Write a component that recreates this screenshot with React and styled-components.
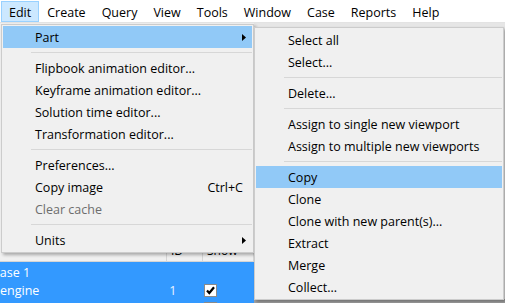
import React from 'react';
import styled, { createGlobalStyle } from 'styled-components';

const GlobalStyle = createGlobalStyle`
  html, body {
    margin: 0;
    padding: 0;
    background: #f0f0f0;
  }
  body {
    font-family: 'Open Sans', 'Noto Sans', sans-serif;
    font-size: 12.5px;
    color: #000;
  }
`;

const menuBarItems = ['Edit', 'Create', 'Query', 'View', 'Tools', 'Window', 'Case', 'Reports', 'Help'];

const editMenu = [
  { label: 'Part', submenu: true, active: true },
  { sep: true },
  { label: 'Flipbook animation editor...' },
  { label: 'Keyframe animation editor...' },
  { label: 'Solution time editor...' },
  { label: 'Transformation editor...' },
  { sep: true },
  { label: 'Preferences...' },
  { label: 'Copy image', shortcut: 'Ctrl+C' },
  { label: 'Clear cache', disabled: true },
  { sep: true },
  { label: 'Units', submenu: true },
];

const partMenu = [
  { label: 'Select all' },
  { label: 'Select...' },
  { sep: true },
  { label: 'Delete...' },
  { sep: true },
  { label: 'Assign to single new viewport' },
  { label: 'Assign to multiple new viewports' },
  { sep: true },
  { label: 'Copy', active: true },
  { label: 'Clone' },
  { label: 'Clone with new parent(s)...' },
  { label: 'Extract' },
  { label: 'Merge' },
  { label: 'Collect...' },
];

// the tree is scrolled a little to the right, so the case name is cut
const treeRows = [
  { name: 'Case 1', id: '', show: false, indent: -8 },
  { name: 'engine', id: '1', show: true, indent: 0 },
  { name: 'intake', id: '2', show: true, indent: 0 },
];

const Arrow = () => (
  <svg width="4" height="7" viewBox="0 0 4 7">
    <polygon points="0,0 4,3.5 0,7" fill="#000" />
  </svg>
);

const Check = () => (
  <svg width="11" height="11" viewBox="0 0 11 11">
    <path d="M2 5.5 L4.3 8 L9 2.2" fill="none" stroke="#000" strokeWidth="2.2" />
  </svg>
);

const Menu = ({ items, left, top, width }) => (
  <MenuPanel $left={left} $top={top} $width={width}>
    {items.map((item, i) =>
      item.sep ? (
        <Separator key={i} />
      ) : (
        <MenuItem key={i} $active={item.active} $disabled={item.disabled}>
          <span>{item.label}</span>
          {item.shortcut && <Shortcut>{item.shortcut}</Shortcut>}
          {item.submenu && (
            <SubArrow>
              <Arrow />
            </SubArrow>
          )}
        </MenuItem>
      )
    )}
  </MenuPanel>
);

const App = () => {
  return (
    <Window>
      <GlobalStyle />
      <MenuBar>
        {menuBarItems.map((name) => (
          <MenuBarItem key={name} $open={name === 'Edit'}>
            {name}
          </MenuBarItem>
        ))}
      </MenuBar>
      <Workspace>
        <TreePanel>
          <TreeToolbar />
          <TreeHeader>
            <HeaderCell $width={167}></HeaderCell>
            <HeaderCell $width={36}>ID</HeaderCell>
            <HeaderCell $width={51}>Show</HeaderCell>
          </TreeHeader>
          <TreeBody>
            {treeRows.map((row) => (
              <TreeRow key={row.name}>
                <NameCell $indent={row.indent}>{row.name}</NameCell>
                <IdCell>{row.id}</IdCell>
                <ShowCell>
                  {row.show && (
                    <CheckBox>
                      <Check />
                    </CheckBox>
                  )}
                </ShowCell>
              </TreeRow>
            ))}
          </TreeBody>
        </TreePanel>
        <ViewPanel>
          <ViewArea />
          <StatusStrip />
        </ViewPanel>
      </Workspace>
      <Menu items={editMenu} left={1} top={24} width={253} />
      <Menu items={partMenu} left={254} top={27} width={250} />
    </Window>
  );
};

const Window = styled.div`
  position: relative;
  width: 505px;
  height: 303px;
  overflow: hidden;
  display: flex;
  flex-direction: column;
  background: #f0f0f0;
`;

const MenuBar = styled.div`
  height: 23px;
  box-sizing: border-box;
  padding: 1px 0 0 1px;
  background: #fff;
  border-bottom: 1px solid #e3e3e3;
  display: flex;
  align-items: stretch;
`;

const MenuBarItem = styled.div`
  display: flex;
  align-items: center;
  padding: 1px 7px 0;
  height: 21px;
  box-sizing: border-box;
  border: 1px solid ${(p) => (p.$open ? '#99d1ff' : 'transparent')};
  background: ${(p) => (p.$open ? '#cce8ff' : 'transparent')};
`;

const Workspace = styled.div`
  flex: 1;
  display: flex;
`;

const TreePanel = styled.div`
  width: 254px;
  display: flex;
  flex-direction: column;
  background: #f0f0f0;
`;

const TreeToolbar = styled.div`
  flex: 1;
`;

const TreeHeader = styled.div`
  height: 22px;
  display: flex;
  background: #f0f0f0;
  border-bottom: 1px solid #d5d5d5;
`;

const HeaderCell = styled.div`
  width: ${(p) => p.$width}px;
  box-sizing: border-box;
  padding: 3px 0 0 4px;
  border-right: 1px solid #d5d5d5;
  font-size: 12px;
`;

const TreeBody = styled.div`
  height: 40px;
  background: #3399ff;
  color: #fff;
  padding-top: 1px;
`;

const TreeRow = styled.div`
  height: 18px;
  display: flex;
  align-items: center;
`;

const NameCell = styled.div`
  width: 167px;
  margin-left: ${(p) => p.$indent}px;
  white-space: nowrap;
`;

const IdCell = styled.div`
  width: 36px;
  padding-left: 5px;
  box-sizing: border-box;
  color: #eaf4ff;
`;

const ShowCell = styled.div`
  width: 51px;
  padding-left: 4px;
  display: flex;
  align-items: center;
`;

const CheckBox = styled.div`
  width: 13px;
  height: 13px;
  box-sizing: border-box;
  background: #fff;
  border: 1px solid #8a8a8a;
  display: flex;
  align-items: center;
  justify-content: center;
`;

const ViewPanel = styled.div`
  flex: 1;
  display: flex;
  flex-direction: column;
`;

const ViewArea = styled.div`
  flex: 1;
  background: #e6e6e6;
`;

const StatusStrip = styled.div`
  height: 4px;
  background: #a3a3a3;
`;

const MenuPanel = styled.div`
  position: absolute;
  left: ${(p) => p.$left}px;
  top: ${(p) => p.$top}px;
  width: ${(p) => p.$width}px;
  box-sizing: border-box;
  padding: 1px;
  background: #f0f0f0;
  border: 1px solid #cccccc;
  box-shadow: 2px 2px 3px rgba(0, 0, 0, 0.3);
  display: flex;
  flex-direction: column;
`;

const MenuItem = styled.div`
  height: 22px;
  display: flex;
  align-items: center;
  padding: 1px 0 0 32px;
  box-sizing: border-box;
  white-space: nowrap;
  background: ${(p) => (p.$active ? '#91c9f7' : 'transparent')};
  color: ${(p) => (p.$disabled ? '#6d6d6d' : '#000')};
`;

const Shortcut = styled.span`
  margin-left: auto;
  margin-right: 9px;
`;

const SubArrow = styled.span`
  margin-left: auto;
  margin-right: 6px;
  display: flex;
`;

const Separator = styled.div`
  height: 1px;
  margin: 4px 0 4px 28px;
  background: #d7d7d7;
`;

export default App;
